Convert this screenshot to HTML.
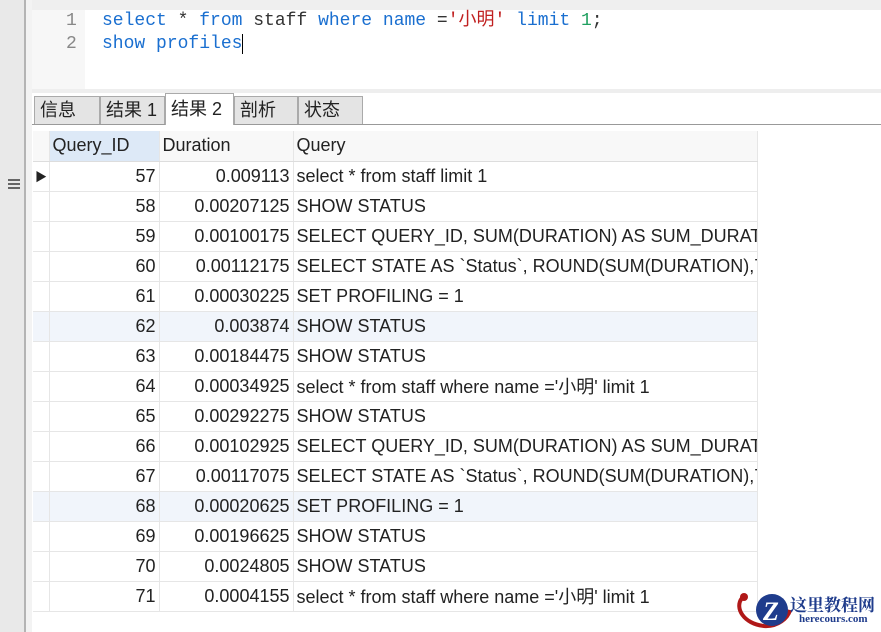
<!DOCTYPE html>
<html><head><meta charset="utf-8"><style>
*{margin:0;padding:0;box-sizing:border-box}
body{width:881px;height:632px;overflow:hidden;background:#fff;position:relative;font-family:"Liberation Sans","Noto Sans CJK SC",sans-serif}
.abs{position:absolute}
.code{font-family:"Liberation Mono","Noto Sans CJK SC",monospace;font-size:18px;line-height:23px;white-space:pre}
.k{color:#1a6fd0}.s{color:#c02020}.n{color:#20a060}
table{border-collapse:collapse;font-size:18px;color:#222}
td{height:30px;border-right:1px solid #e6e6e6;border-bottom:1px solid #e6e6e6;padding:0 3px;white-space:nowrap;overflow:hidden}
td.i{text-align:right}
tr.h td{background:#f8f8f8;border-bottom:1px solid #ddd}
tr.b td{background:#f1f5fb}
.tab{position:absolute;top:96px;height:28px;border:1px solid #aaa;border-bottom:none;background:#e4e4e4;font-size:18px;padding-left:5px;line-height:27px;color:#222}
</style></head><body>
<div class="abs" style="left:0;top:0;width:26px;height:632px;background:#e9e9e9;border-right:2px solid #b4b4b4"></div>
<div class="abs" style="left:26px;top:0;width:6px;height:632px;background:#f3f3f3"></div>
<div class="abs" style="left:8px;top:179px;width:12px;height:2px;background:#666;box-shadow:0 4px 0 #666,0 8px 0 #666"></div>
<div class="abs" style="left:32px;top:0;width:849px;height:10px;background:#efefef"></div>
<div class="abs" style="left:32px;top:10px;width:53px;height:80px;background:#f7f7f7"></div>
<div class="abs code" style="left:66px;top:10px;color:#888">1
2</div>
<div class="abs code" style="left:102px;top:10px;color:#333"><span class="k">select</span> * <span class="k">from</span> staff <span class="k">where</span> <span class="k">name</span> =<span class="s">'小明'</span> <span class="k">limit</span> <span class="n">1</span>;
<span class="k">show</span> <span class="k">profiles</span><span style="border-left:1px solid #000"></span></div>
<div class="abs" style="left:32px;top:89px;width:849px;height:4px;background:#eee"></div>
<div class="abs" style="left:32px;top:124px;width:849px;height:1px;background:#999"></div>
<div class="tab" style="left:34px;width:66px">信息</div>
<div class="tab" style="left:100px;width:65px">结果 1</div>
<div class="tab" style="left:165px;width:69px;top:93px;height:32px;background:#fff;line-height:30px">结果 2</div>
<div class="tab" style="left:234px;width:64px">剖析</div>
<div class="tab" style="left:298px;width:65px">状态</div>
<table class="abs" style="left:33px;top:131px;table-layout:fixed;width:724px">
<colgroup><col style="width:16px"><col style="width:110px"><col style="width:134px"><col style="width:464px"></colgroup>
<tr class="h"><td></td><td style="background:#dde9f7">Query_ID</td><td>Duration</td><td>Query</td></tr>
<tr><td style="font-size:12px;padding:0 2px">▶</td><td class="i">57</td><td class="i">0.009113</td><td>select * from staff limit 1</td></tr>
<tr><td></td><td class="i">58</td><td class="i">0.00207125</td><td>SHOW STATUS</td></tr>
<tr><td></td><td class="i">59</td><td class="i">0.00100175</td><td>SELECT QUERY_ID, SUM(DURATION) AS SUM_DURATION</td></tr>
<tr><td></td><td class="i">60</td><td class="i">0.00112175</td><td>SELECT STATE AS `Status`, ROUND(SUM(DURATION),7)</td></tr>
<tr><td></td><td class="i">61</td><td class="i">0.00030225</td><td>SET PROFILING = 1</td></tr>
<tr class="b"><td></td><td class="i">62</td><td class="i">0.003874</td><td>SHOW STATUS</td></tr>
<tr><td></td><td class="i">63</td><td class="i">0.00184475</td><td>SHOW STATUS</td></tr>
<tr><td></td><td class="i">64</td><td class="i">0.00034925</td><td>select * from staff where name ='小明' limit 1</td></tr>
<tr><td></td><td class="i">65</td><td class="i">0.00292275</td><td>SHOW STATUS</td></tr>
<tr><td></td><td class="i">66</td><td class="i">0.00102925</td><td>SELECT QUERY_ID, SUM(DURATION) AS SUM_DURATION</td></tr>
<tr><td></td><td class="i">67</td><td class="i">0.00117075</td><td>SELECT STATE AS `Status`, ROUND(SUM(DURATION),7)</td></tr>
<tr class="b"><td></td><td class="i">68</td><td class="i">0.00020625</td><td>SET PROFILING = 1</td></tr>
<tr><td></td><td class="i">69</td><td class="i">0.00196625</td><td>SHOW STATUS</td></tr>
<tr><td></td><td class="i">70</td><td class="i">0.0024805</td><td>SHOW STATUS</td></tr>
<tr><td></td><td class="i">71</td><td class="i">0.0004155</td><td>select * from staff where name ='小明' limit 1</td></tr>
</table>
<svg class="abs" style="left:734px;top:588px" width="60" height="44" viewBox="0 0 60 44">
<path d="M8 10 C0 20 10 36 30 38 C44 39 54 30 56 22" fill="none" stroke="#b01818" stroke-width="4"/>
<circle cx="10" cy="9" r="4" fill="#b01818"/>
<circle cx="38" cy="22" r="16" fill="#1f3c8c"/>
<text x="29" y="32" font-family="Liberation Serif,serif" font-weight="bold" font-style="italic" font-size="26" fill="#fff">Z</text>
</svg>
<div class="abs" style="left:790px;top:591px;font-family:'Noto Serif CJK SC',serif;font-weight:bold;font-size:17px;color:#1f3c8c;letter-spacing:0px">这里教程网</div>
<div class="abs" style="left:799px;top:613px;font-family:'Liberation Serif',serif;font-weight:bold;font-size:11px;color:#1f3c8c">herecours.com</div>
</body></html>
